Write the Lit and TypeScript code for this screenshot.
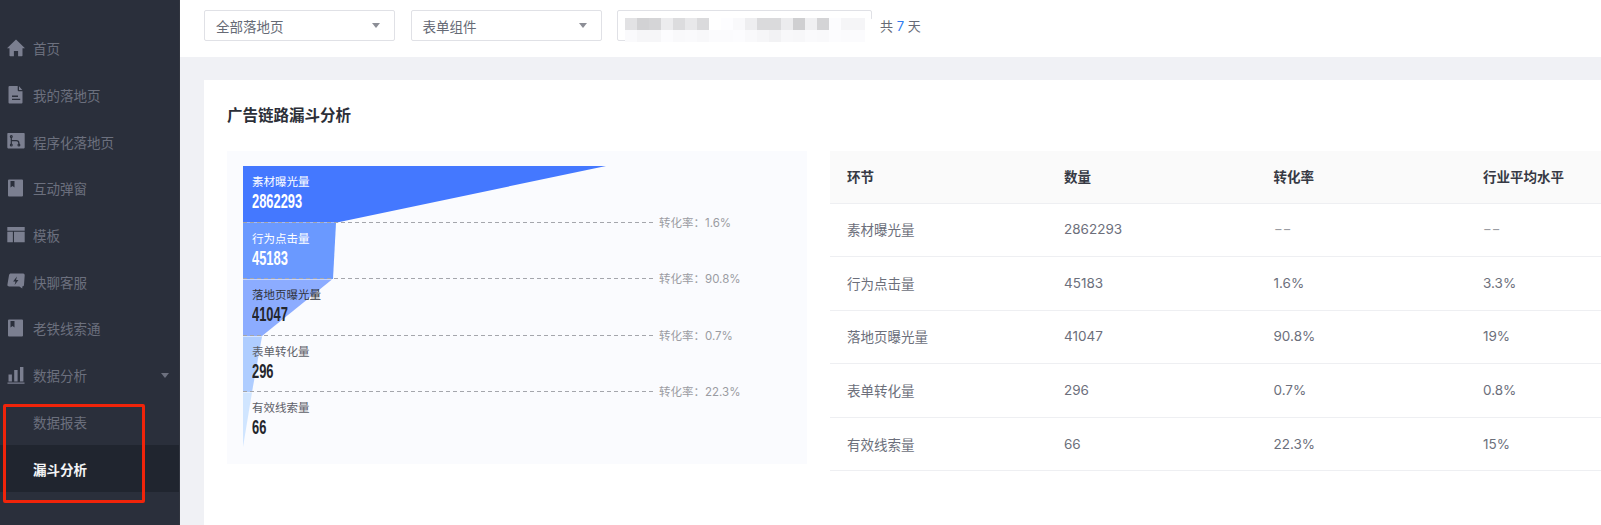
import { LitElement, css, html, svg } from 'lit';
import { customElement } from 'lit/decorators.js';

const ICONS = {
  home: svg`<path d="M9 .6 0 9.200h2.500v7.400a.7.7 0 0 0 .7.7h3.700v-5.200h4.200v5.200h3.700a.7.7 0 0 0 .7-.7V9.200H18z"/>`,
  doc: svg`<path fill-rule="evenodd" d="M2.500 0h8.200v4.300a1 1 0 0 0 1 1h3.800v11.200a1 1 0 0 1-1 1h-12a1 1 0 0 1-1-1V1a1 1 0 0 1 1-1zM5 9.600v1.300h6V9.600zM5 12.800v1.300h8.200v-1.300z"/><path d="M12 .3 15.300 4H12z"/>`,
  flow: svg`<rect x=".3" y="1" width="17.400" height="15.400" rx=".8"/>
    <g fill="none" stroke="#2a2f3b" stroke-width="1.200"><path d="M4.300 5v7.300M4.300 8.600h5a2.600 2.600 0 0 1 2.600 2.600v1"/><circle cx="4.300" cy="4.400" r=".9"/><circle cx="4.300" cy="13.100" r=".9"/><circle cx="11.900" cy="13.100" r=".9"/></g>`,
  book: svg`<path fill-rule="evenodd" d="M2 .5h13a1 1 0 0 1 1 1v15a1 1 0 0 1-1 1H2a1 1 0 0 1-1-1v-15a1 1 0 0 1 1-1zM3.500 2v6.600l2-1.500 2 1.500V2z"/>`,
  table: svg`<path d="M.3 1h17.400v3.800H.3zM.3 5.800h5.600v10.400H.3zM7 5.800h10.700v10.400H7z"/>`,
  chat: svg`<path fill-rule="evenodd" d="M4 1.500h12a1.600 1.600 0 0 1 1.700 1.700l-.7 9.600c0 1-.6 1.600-1.700 1.600v2.100l-3-2.100H2.200c-1.100 0-1.900-.7-1.800-1.700L2 3.200C2.200 2.100 2.900 1.500 4 1.500zM9.900 4.600 6.100 9.500h2.400l-.9 3.400 3.900-5h-2.400z"/>`,
  bars: svg`<path d="M1.500 8.500h3.400v7H1.500zM7.200 4h3.400v11.500H7.200zM13 1h3.400v14.500H13zM.5 16.500h17v1.200H.5z"/>`,
};

const NAV = [
  { icon: ICONS.home, label: '首页' },
  { icon: ICONS.doc, label: '我的落地页' },
  { icon: ICONS.flow, label: '程序化落地页' },
  { icon: ICONS.book, label: '互动弹窗' },
  { icon: ICONS.table, label: '模板' },
  { icon: ICONS.chat, label: '快聊客服' },
  { icon: ICONS.book, label: '老铁线索通' },
  { icon: ICONS.bars, label: '数据分析', caret: true },
  { label: '数据报表' },
  { label: '漏斗分析', active: true },
];

const FUNNEL = [
  { label: '素材曝光量', value: '2862293', rate: '1.6%', cls: 'light' },
  { label: '行为点击量', value: '45183', rate: '90.8%', cls: 'light' },
  { label: '落地页曝光量', value: '41047', rate: '0.7%', cls: 'dark' },
  { label: '表单转化量', value: '296', rate: '22.3%', cls: 'mid' },
  { label: '有效线索量', value: '66', rate: '', cls: 'mid' },
];

const ROWS = [
  ['素材曝光量', '2862293', '--', '--'],
  ['行为点击量', '45183', '1.6%', '3.3%'],
  ['落地页曝光量', '41047', '90.8%', '19%'],
  ['表单转化量', '296', '0.7%', '0.8%'],
  ['有效线索量', '66', '22.3%', '15%'],
];

// blurred date range, one grey level per 12px mosaic cell
const MOSAIC_TOP = [226, 210, 213, 236, 220, 232, 218, 255, 253, 249, 238, 218, 218, 236, 207, 240, 212, 252, 245, 245];
const MOSAIC_BOTTOM = [250, 246, 246, 252, 249, 250, 248, 251, 251, 252, 249, 246, 242, 248, 247, 250, 249, 252, 251, 251];

@customElement('app-root')
export class AppRoot extends LitElement {
  static override styles = css`
    :host {
      display: flex;
      width: 1601px;
      height: 525px;
      overflow: hidden;
      background: #f0f1f5;
      font-family: 'Inter', 'Noto Sans CJK SC', sans-serif;
      font-size: 13.5px;
    }
    .side {
      position: relative;
      flex: 0 0 180px;
      box-sizing: border-box;
      padding-top: 25px;
      background: #2a2f3b;
      border-right: 1px solid #31353f;
    }
    .nav {
      display: flex;
      align-items: center;
      height: 46.7px;
      color: #6c707e;
      padding-left: 33px;
      position: relative;
    }
    .nav svg.ic {
      position: absolute;
      left: 7px;
      top: 14px;
      width: 18px;
      height: 18px;
      fill: #7b7f90;
    }
    .nav.active {
      background: #20252f;
      color: #f4f5f7;
      font-weight: 600;
    }
    .nav .caret {
      position: absolute;
      right: 10px;
      top: 21px;
      border: 4.500px solid transparent;
      border-top: 5px solid #6c707e;
      border-bottom: 0;
    }
    .mark {
      position: absolute;
      left: 3px;
      top: 404px;
      width: 142px;
      height: 99px;
      box-sizing: border-box;
      border: 3px solid #f0240a;
      border-radius: 2px;
    }
    .main {
      flex: 1;
      display: flex;
      flex-direction: column;
      min-width: 0;
    }
    .top {
      flex: 0 0 57px;
      display: flex;
      align-items: flex-start;
      box-sizing: border-box;
      padding: 10px 0 0 24px;
      background: #fff;
      color: #666a75;
    }
    .select {
      width: 191px;
      height: 31px;
      box-sizing: border-box;
      margin-right: 15.500px;
      padding: 0 14px 0 11px;
      display: flex;
      align-items: center;
      justify-content: space-between;
      border: 1px solid #e0e1e6;
      border-radius: 2px;
    }
    .select i {
      border: 4px solid transparent;
      border-top: 5px solid #8c8e96;
      border-bottom: 0;
    }
    .date {
      position: relative;
      width: 255px;
      height: 31px;
      box-sizing: border-box;
      border: 1px solid #e0e1e6;
      border-radius: 2px;
    }
    .blob {
      position: absolute;
      left: 2px;
      top: 6px;
      width: 257px;
      height: 27px;
      background: #fff;
      border-radius: 4px 12px 12px 22px;
    }
    .mosaic {
      position: absolute;
      left: 7px;
      top: 7px;
      display: grid;
      grid-template-columns: repeat(20, 12px);
      grid-auto-rows: 12px;
    }
    .total {
      margin-left: 8px;
      height: 31px;
      line-height: 32px;
      font-size: 13px;
    }
    .total b {
      font-weight: 400;
      color: #2f7bf0;
    }
    .content {
      flex: 1;
      padding: 23px 0 0 24px;
    }
    .card {
      height: 100%;
      box-sizing: border-box;
      padding: 23px 0 0 23px;
      background: #fff;
    }
    h2 {
      margin: 0 0 25px;
      height: 22px;
      line-height: 26px;
      font-size: 15.500px;
      font-weight: 700;
      color: #2c2f38;
    }
    .body {
      display: flex;
      align-items: flex-start;
      gap: 23px;
      padding-top: 1px;
    }
    .panel {
      position: relative;
      flex: 0 0 580px;
      height: 313px;
      box-sizing: border-box;
      padding: 15px 0 0 16px;
      background: #fafbfe;
    }
    .shape {
      position: absolute;
      left: 16px;
      top: 15px;
      width: 364px;
      height: 282px;
    }
    .step {
      position: relative;
      width: 410px;
      height: 56.500px;
      box-sizing: border-box;
      padding: 8px 0 0 9px;
      background: linear-gradient(90deg, #a4a6ac 4px, transparent 4px) left bottom / 7px 1px repeat-x;
    }
    .step.last {
      background: none;
    }
    .step .name {
      line-height: 16px;
      font-size: 11.500px;
    }
    .step .num {
      display: block;
      width: 100px;
      line-height: 22px;
      font-family: 'Liberation Sans', sans-serif;
      font-size: 19.500px;
      font-weight: 700;
      transform: scaleX(0.66);
      transform-origin: left center;
    }
    .light { color: #fff; }
    .dark .name { color: #2f323a; }
    .dark .num, .mid .num { color: #24262c; }
    .mid .name { color: #5d6068; }
    .rate {
      position: absolute;
      left: 416px;
      bottom: -8px;
      white-space: nowrap;
      line-height: 16px;
      font-size: 11.500px;
      color: #9a9ca2;
    }
    table {
      flex: 1;
      border-collapse: collapse;
      table-layout: fixed;
      color: #6c6f7b;
    }
    th, td {
      box-sizing: border-box;
      padding: 0 0 0 17px;
      text-align: left;
      border-bottom: 1px solid #eeeff2;
    }
    th {
      height: 52px;
      padding-bottom: 1px;
      background: #fafafa;
      color: #363944;
      font-weight: 600;
    }
    td {
      height: 53.600px;
      padding-bottom: 1px;
    }
    .none {
      display: inline-block;
      color: #9a9ca2;
      transform: scaleX(1.4);
      transform-origin: left center;
    }
    col.c1 { width: 217px; }
    col.c2, col.c3 { width: 209.500px; }
  `;

  override render() {
    return html`
      <aside class="side">
        ${NAV.map(n => html`
          <div class="nav ${n.active ? 'active' : ''}">
            ${n.icon ? html`<svg class="ic" viewBox="0 0 18 18">${n.icon}</svg>` : ''}
            ${n.label}
            ${n.caret ? html`<span class="caret"></span>` : ''}
          </div>
        `)}
        <div class="mark"></div>
      </aside>
      <div class="main">
        <div class="top">
          <div class="select">全部落地页<i></i></div>
          <div class="select">表单组件<i></i></div>
          <div class="date">
            <div class="blob"></div>
            <div class="mosaic">
              ${[...MOSAIC_TOP, ...MOSAIC_BOTTOM].map(v => html`<span style="background: rgb(${v},${v},${v + 2})"></span>`)}
            </div>
          </div>
          <div class="total">共 <b>7</b> 天</div>
        </div>
        <div class="content">
          <div class="card">
            <h2>广告链路漏斗分析</h2>
            <div class="body">
              <div class="panel">
                <svg class="shape" viewBox="0 0 364 282">
                  <polygon points="0,0 363,0 94,56.500 0,56.500" fill="#4478ff" />
                  <polygon points="0,57 93,57 90,113 0,113" fill="#6a99ff" />
                  <polygon points="0,113.500 89,113.500 19,170 0,170" fill="#8cacff" />
                  <polygon points="0,170.500 19,170.500 9,226 0,226" fill="#afcdff" />
                  <polygon points="0,226.500 9,226.500 0,281" fill="#d0e5ff" />
                </svg>
                ${FUNNEL.map((s, i) => html`
                  <div class="step ${s.cls} ${i === FUNNEL.length - 1 ? 'last' : ''}">
                    <div class="name">${s.label}</div>
                    <span class="num">${s.value}</span>
                    ${s.rate ? html`<span class="rate">转化率：${s.rate}</span>` : ''}
                  </div>
                `)}
              </div>
              <table>
                <colgroup><col class="c1" /><col class="c2" /><col class="c3" /><col /></colgroup>
                <thead><tr><th>环节</th><th>数量</th><th>转化率</th><th>行业平均水平</th></tr></thead>
                <tbody>
                  ${ROWS.map(r => html`<tr>${r.map(c => html`<td>${c === '--' ? html`<span class="none">--</span>` : c}</td>`)}</tr>`)}
                </tbody>
              </table>
            </div>
          </div>
        </div>
      </div>
    `;
  }
}

declare global {
  interface HTMLElementTagNameMap {
    'app-root': AppRoot;
  }
}
